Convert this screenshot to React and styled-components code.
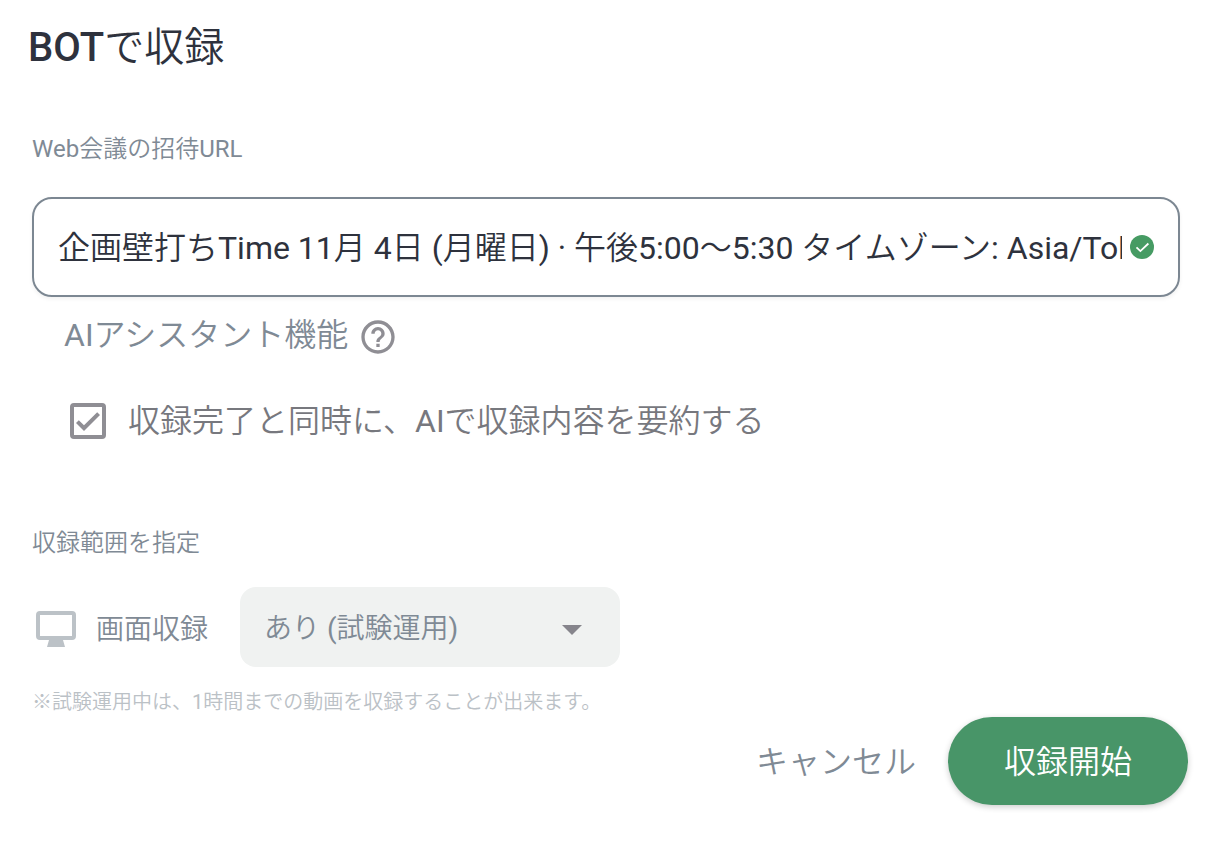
import React, { useState } from "react";
import styled, { createGlobalStyle } from "styled-components";
import { MdHelpOutline } from "react-icons/md";

function App() {
  const [url, setUrl] = useState(
    "企画壁打ちTime 11月 4日 (月曜日) · 午後5:00〜5:30 タイムゾーン: Asia/Tokyo Google Meet の参加に必要な情報"
  );
  const [summarize, setSummarize] = useState(true);

  return (
    <>
      <GlobalStyle />
      <Dialog>
        <Title>
          <strong>BOT</strong>で収録
        </Title>

        <Fields>
          <SectionLabel as="label" htmlFor="invite-url">
            Web会議の招待URL
          </SectionLabel>
          <UrlField>
            <UrlInput
              id="invite-url"
              type="text"
              value={url}
              onChange={(e) => setUrl(e.target.value)}
            />
            <ValidIcon viewBox="0 0 24 24" aria-hidden="true">
              <circle cx="12" cy="12" r="12" />
              <path d="M6.500 12.300l3.900 3.800 8-7.600" />
            </ValidIcon>
          </UrlField>

          <Assistant>
            <AssistantTitle>
              <span>AIアシスタント機能</span>
              <HelpButton type="button" aria-label="ヘルプ">
                <MdHelpOutline size={40} />
              </HelpButton>
            </AssistantTitle>
            <CheckLabel>
              <CheckBox>
                <input
                  type="checkbox"
                  checked={summarize}
                  onChange={(e) => setSummarize(e.target.checked)}
                />
                {summarize && (
                  <svg viewBox="3 3 18 18" aria-hidden="true">
                    <path d="M10 17l-4-4 1.41-1.42L10 14.17l6.59-6.59L18 9z" />
                  </svg>
                )}
              </CheckBox>
              収録完了と同時に、AIで収録内容を要約する
            </CheckLabel>
          </Assistant>

          <SectionLabel>収録範囲を指定</SectionLabel>
          <RangeRow>
            <MonitorIcon viewBox="0 0 40 36" aria-hidden="true">
              <path
                fillRule="evenodd"
                d="M4 0h32a4 4 0 0 1 4 4v21a4 4 0 0 1-4 4h-9l2 7H11l2-7H4a4 4 0 0 1-4-4V4a4 4 0 0 1 4-4zM4 4v21h32V4z"
              />
            </MonitorIcon>
            <RangeLabel htmlFor="screen-record">画面収録</RangeLabel>
            <SelectWrap>
              <Select id="screen-record" defaultValue="on">
                <option value="on">あり (試験運用)</option>
                <option value="off">なし</option>
              </Select>
              <Arrow viewBox="0 0 20 10" aria-hidden="true">
                <path d="M0 0h20L10 10z" />
              </Arrow>
            </SelectWrap>
          </RangeRow>
          <Note>※試験運用中は、1時間までの動画を収録することが出来ます。</Note>
        </Fields>

        <Actions>
          <CancelButton type="button">キャンセル</CancelButton>
          <StartButton type="button">収録開始</StartButton>
        </Actions>
      </Dialog>
    </>
  );
}

export default App;

const GlobalStyle = createGlobalStyle`
  * {
    box-sizing: border-box;
  }

  body {
    margin: 0;
    background: #fff;
    color: #2e323d;
    font-family: Roboto, "Noto Sans CJK JP DemiLight", "Noto Sans CJK JP Light", "Noto Sans CJK JP", sans-serif;
  }

  button, input, select {
    font: inherit;
  }
`;

const Dialog = styled.main`
  padding: 24px 44px 44px 32px;
`;

const Title = styled.h1`
  margin: 0 0 61px -4px;
  font-size: 40px;
  font-weight: 400;
  line-height: 48px;

  strong {
    font-weight: 500;
  }
`;

const Fields = styled.div`
  margin-right: 8px;
`;

const SectionLabel = styled.div`
  display: block;
  font-size: 24px;
  line-height: 32px;
  color: #7f8a95;
`;

const UrlField = styled.div`
  display: flex;
  align-items: center;
  gap: 8px;
  height: 100px;
  margin-top: 32px;
  padding: 0 24px;
  border: 2px solid #7c8792;
  border-radius: 20px;
  box-shadow: 0 2px 4px rgba(0, 0, 0, 0.06);
`;

const UrlInput = styled.input`
  flex: 1;
  min-width: 0;
  height: 52px;
  padding: 0 0 4px;
  border: 0;
  outline: 0;
  background: transparent;
  color: #2e323d;
  font-size: 32px;
`;

const ValidIcon = styled.svg`
  flex: none;
  width: 24px;
  height: 24px;

  circle {
    fill: #469b63;
  }

  path {
    fill: none;
    stroke: #fff;
    stroke-width: 1.8;
  }
`;

const Assistant = styled.section`
  padding: 16px 32px 0;
  margin-bottom: 82px;
`;

const AssistantTitle = styled.div`
  display: flex;
  align-items: center;
  gap: 10px;
  height: 48px;
  font-size: 32px;
  line-height: 48px;
  color: #7f8a95;

  span {
    padding-bottom: 4px;
  }
`;

const HelpButton = styled.button`
  display: flex;
  padding: 0;
  border: 0;
  background: none;
  color: #8f8e94;
`;

const CheckLabel = styled.label`
  display: flex;
  align-items: center;
  gap: 22px;
  margin-top: 36px;
  padding-left: 6px;
  font-size: 32px;
  line-height: 48px;
  color: #77787e;
`;

const CheckBox = styled.span`
  display: grid;
  width: 36px;
  height: 36px;

  input,
  svg {
    grid-area: 1 / 1;
    width: 36px;
    height: 36px;
    margin: 0;
  }

  input {
    appearance: none;
    border: 4px solid #8f8e94;
    border-radius: 4px;
  }

  svg {
    fill: #8f8e94;
    pointer-events: none;
  }
`;

const RangeRow = styled.div`
  display: flex;
  align-items: center;
  margin-top: 28px;
  padding-left: 4px;
`;

const MonitorIcon = styled.svg`
  width: 40px;
  height: 36px;
  margin-top: 4px;
  fill: #bcc2c7;
`;

const RangeLabel = styled.label`
  margin: 0 32px 0 20px;
  font-size: 28px;
  color: #7f8a95;
`;

const SelectWrap = styled.div`
  position: relative;
  width: 380px;
`;

const Select = styled.select`
  appearance: none;
  display: block;
  width: 100%;
  height: 80px;
  padding: 2px 64px 0 24px;
  border: 0;
  border-radius: 16px;
  background: #f0f2f1;
  color: #7f8a95;
  font-size: 28px;
`;

const Arrow = styled.svg`
  position: absolute;
  top: 38px;
  right: 38px;
  width: 20px;
  height: 10px;
  fill: #86858c;
  pointer-events: none;
`;

const Note = styled.p`
  margin: 20px 0 0;
  font-size: 20px;
  line-height: 30px;
  color: #bbc1c6;
`;

const Actions = styled.div`
  display: flex;
  justify-content: flex-end;
  align-items: center;
  gap: 32px;
`;

const Button = styled.button`
  height: 88px;
  border: 0;
  font-size: 32px;
  cursor: pointer;
`;

const CancelButton = styled(Button)`
  padding: 0 0 4px;
  background: none;
  color: #7f8a95;
`;

const StartButton = styled(Button)`
  padding: 0 56px 4px;
  border-radius: 44px;
  background: #489568;
  color: #fff;
  box-shadow: 0 2px 6px rgba(0, 0, 0, 0.2);
`;
